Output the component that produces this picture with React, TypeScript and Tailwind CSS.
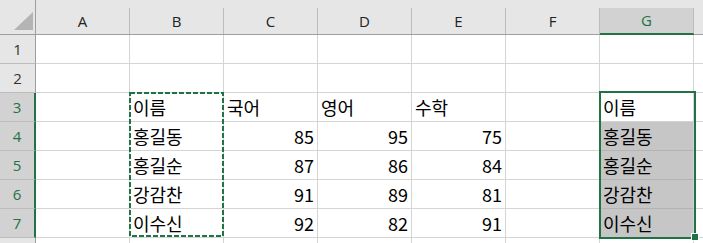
import React from 'react';

const cols = ['A', 'B', 'C', 'D', 'E', 'F', 'G'];

type Cell = { v: string; num?: boolean };

const data: Record<number, Record<string, Cell>> = {
  3: { B: { v: '이름' }, C: { v: '국어' }, D: { v: '영어' }, E: { v: '수학' }, G: { v: '이름' } },
  4: { B: { v: '홍길동' }, C: { v: '85', num: true }, D: { v: '95', num: true }, E: { v: '75', num: true }, G: { v: '홍길동' } },
  5: { B: { v: '홍길순' }, C: { v: '87', num: true }, D: { v: '86', num: true }, E: { v: '84', num: true }, G: { v: '홍길순' } },
  6: { B: { v: '강감찬' }, C: { v: '91', num: true }, D: { v: '89', num: true }, E: { v: '81', num: true }, G: { v: '강감찬' } },
  7: { B: { v: '이수신' }, C: { v: '92', num: true }, D: { v: '82', num: true }, E: { v: '91', num: true }, G: { v: '이수신' } },
};

const rows = [1, 2, 3, 4, 5, 6, 7, 8];

function isSelRow(r: number) {
  return r >= 3 && r <= 7;
}

export default function App() {
  return (
    <div className="relative w-[703px] h-[243px] overflow-hidden bg-white font-['Noto_Sans_CJK_KR',sans-serif]">
      <div className="grid grid-cols-[36px_repeat(7,94px)_1fr] grid-rows-[35px_repeat(8,29px)]">
        {/* corner */}
        <div className="relative bg-[#e6e6e6] border-b border-r border-[#9e9e9e]">
          <svg className="absolute left-[14px] top-[12px]" width="20" height="19" viewBox="0 0 20 19">
            <polygon points="19,0 19,18 0,18" fill="#b4b4b4" />
          </svg>
        </div>

        {/* column headers */}
        {cols.map((c) => {
          const sel = c === 'G';
          return (
            <div
              key={c}
              className={`bg-[#e6e6e6] pt-[8px] border-b ${sel ? 'border-[#217346]' : 'border-[#9e9e9e]'}`}
            >
              <div
                className={`h-full flex items-center justify-center border-r border-[#bcbcbc] font-['Open_Sans',sans-serif] text-[15px] ${
                  sel ? 'bg-[#d2d2d2] text-[#217346] border-b border-b-[#217346]' : 'text-[#222]'
                }`}
              >
                {c}
              </div>
            </div>
          );
        })}
        <div className="bg-[#e6e6e6] border-b border-[#9e9e9e]" />

        {rows.map((r) => (
          <React.Fragment key={r}>
            <div
              className={`flex items-center justify-center font-['Open_Sans',sans-serif] text-[15px] border-b border-b-[#bcbcbc] ${
                isSelRow(r)
                  ? 'bg-[#d2d2d2] text-[#217346] border-r-2 border-r-[#217346]'
                  : 'bg-[#e6e6e6] text-[#333] border-r border-r-[#9e9e9e]'
              }`}
            >
              {r < 8 ? r : null}
            </div>
            {cols.map((c) => {
              const cell = data[r]?.[c];
              const gray = c === 'G' && r >= 4 && r <= 7;
              return (
                <div
                  key={c}
                  className={`flex items-end border-r border-b border-[#d4d4d4] pb-[5px] text-[18px] leading-[18px] text-black ${
                    cell?.num ? 'justify-end pr-[3px]' : 'justify-start pl-[3px]'
                  } ${gray ? 'bg-[#c6c6c6] border-b-[#b4b4b4]' : 'bg-white'}`}
                >
                  {cell?.v}
                </div>
              );
            })}
            <div className="border-b border-[#d4d4d4] bg-white" />
          </React.Fragment>
        ))}
      </div>

      {/* copy marquee around B3:B7 */}
      <svg className="absolute left-[129px] top-[92px]" width="95" height="145" viewBox="0 0 95 145">
        <rect x="1" y="1" width="93" height="143" fill="none" stroke="#217346" strokeWidth="2" strokeDasharray="5 2" />
      </svg>

      {/* selection G3:G7 */}
      <div className="absolute left-[599px] top-[91px] w-[97px] h-[148px] border-2 border-[#217346]" />
      <div className="absolute left-[691px] top-[233px] w-[8px] h-[8px] bg-[#217346] border border-white" />
    </div>
  );
}
